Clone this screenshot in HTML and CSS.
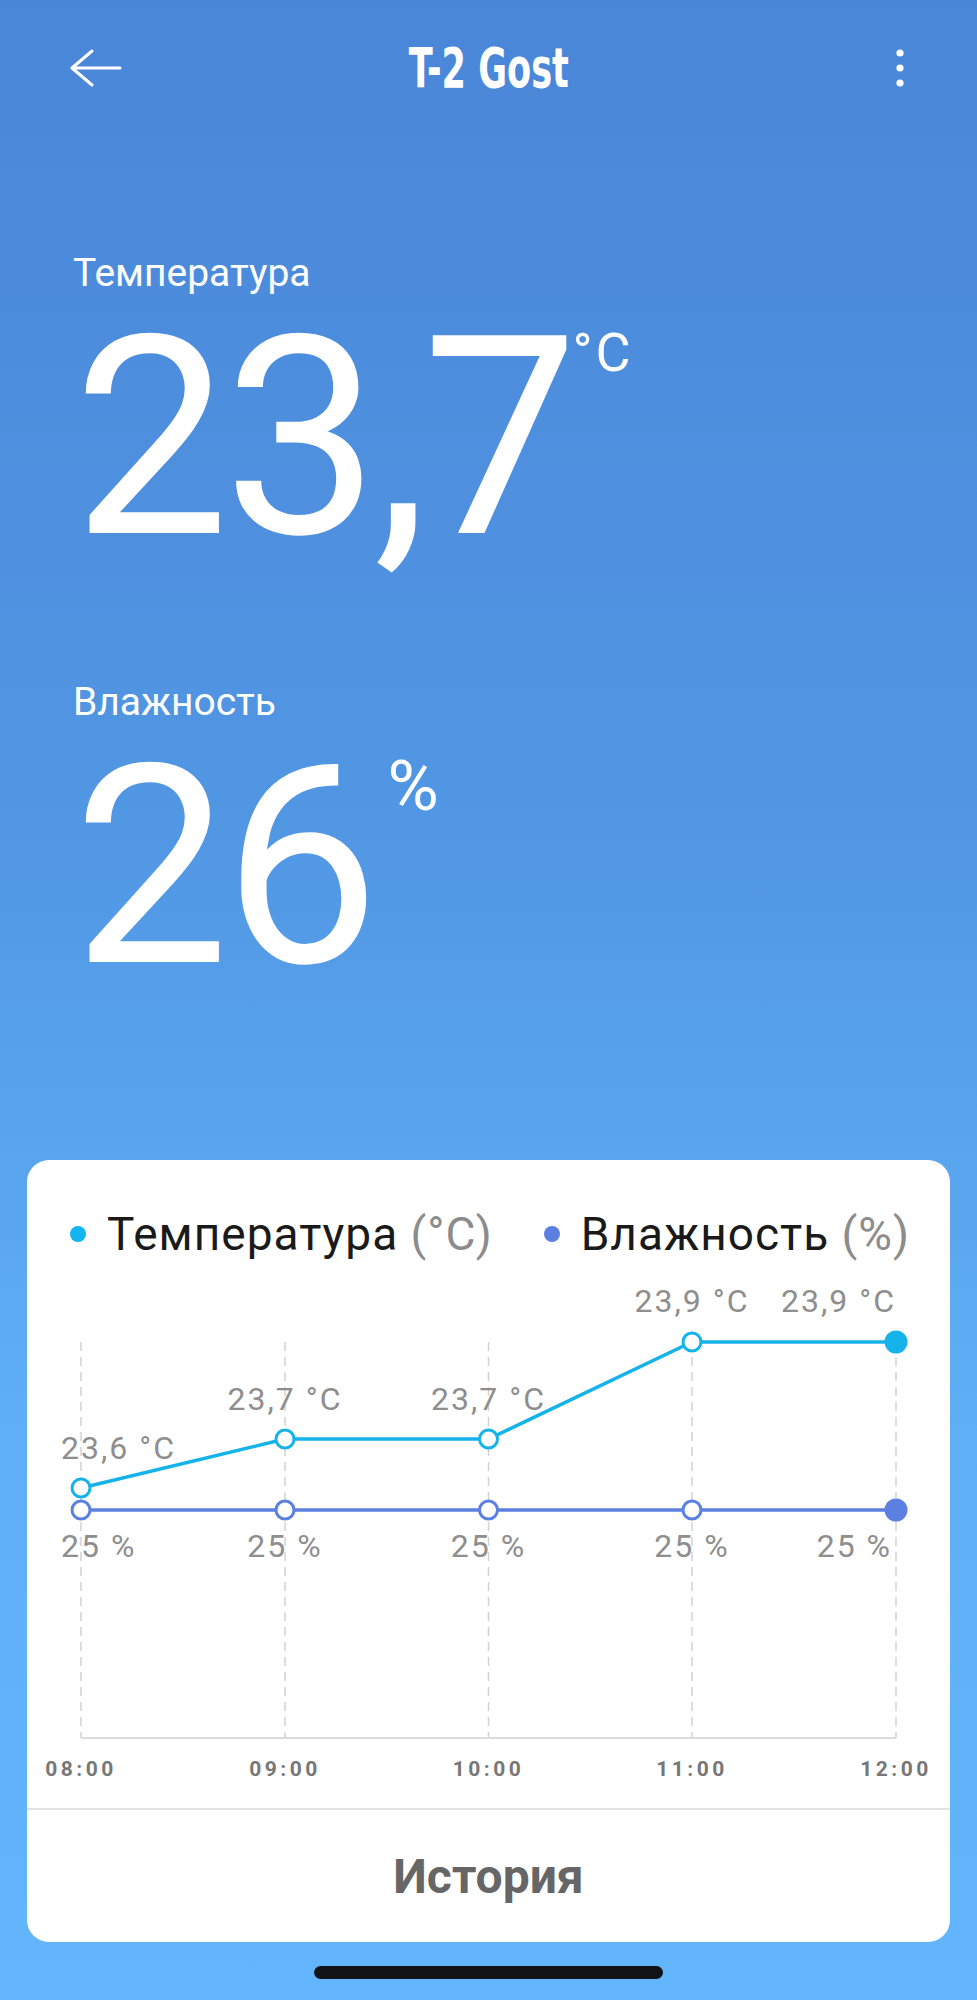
FILE: index.html
```html
<!DOCTYPE html>
<html lang="ru">
<head>
  <meta charset="UTF-8" />
  <meta name="viewport" content="width=device-width, initial-scale=1.0"/>
  <title>T-2 Gost</title>
  <link rel="stylesheet" href="styles.css">
</head>
<body>
  <div class="screen">

    <header class="topbar">
      <button class="icon-btn back" aria-label="Назад">
        <svg width="52" height="38" viewBox="0 0 52 38">
          <path d="M50 19H2M22 2L2 19l20 17" fill="none" stroke="#fff" stroke-width="3" stroke-linecap="round" stroke-linejoin="round"/>
        </svg>
      </button>
      <h1 class="title">T-2 Gost</h1>
      <button class="icon-btn menu" aria-label="Меню">
        <svg width="14" height="40" viewBox="0 0 14 40">
          <circle cx="7" cy="5" r="3.6" fill="#fff"/>
          <circle cx="7" cy="20" r="3.6" fill="#fff"/>
          <circle cx="7" cy="35" r="3.6" fill="#fff"/>
        </svg>
      </button>
    </header>

    <section class="readings">
      <div class="reading">
        <div class="reading-label">Температура</div>
        <div class="reading-value">
          <span class="num">23,7</span><span class="unit unit-temp">°C</span>
        </div>
      </div>
      <div class="reading">
        <div class="reading-label">Влажность</div>
        <div class="reading-value">
          <span class="num">26</span><span class="unit unit-hum">%</span>
        </div>
      </div>
    </section>

    <section class="card">
      <div class="legend">
        <div class="legend-item"><span class="dot dot-temp"></span>Температура <span class="muted">(°C)</span></div>
        <div class="legend-item"><span class="dot dot-hum"></span>Влажность <span class="muted">(%)</span></div>
      </div>

      <svg class="chart" width="923" height="546" viewBox="0 0 923 546">
        <g class="grid">
          <line x1="54" y1="80" x2="54" y2="476"/>
          <line x1="258" y1="80" x2="258" y2="476"/>
          <line x1="461.5" y1="80" x2="461.5" y2="476"/>
          <line x1="665" y1="80" x2="665" y2="476"/>
          <line x1="869" y1="80" x2="869" y2="476"/>
        </g>
        <line class="axis" x1="54" y1="476" x2="869" y2="476"/>

        <polyline class="line-hum" points="54,248 258,248 461.5,248 665,248 869,248"/>
        <polyline class="line-temp" points="54,226 258,177 461.5,177 665,80 869,80"/>

        <g class="pts-hum">
          <circle cx="54" cy="248" r="9"/>
          <circle cx="258" cy="248" r="9"/>
          <circle cx="461.5" cy="248" r="9"/>
          <circle cx="665" cy="248" r="9"/>
          <circle class="last" cx="869" cy="248" r="10"/>
        </g>
        <g class="pts-temp">
          <circle cx="54" cy="226" r="9"/>
          <circle cx="258" cy="177" r="9"/>
          <circle cx="461.5" cy="177" r="9"/>
          <circle cx="665" cy="80" r="9"/>
          <circle class="last" cx="869" cy="80" r="10"/>
        </g>

        <g class="pt-label">
          <text x="34" y="197">23,6 °C</text>
          <text x="258" y="148" text-anchor="middle">23,7 °C</text>
          <text x="461.5" y="148" text-anchor="middle">23,7 °C</text>
          <text x="665" y="50" text-anchor="middle">23,9 °C</text>
          <text x="869" y="50" text-anchor="end">23,9 °C</text>

          <text x="34" y="295">25 %</text>
          <text x="258" y="295" text-anchor="middle">25 %</text>
          <text x="461.5" y="295" text-anchor="middle">25 %</text>
          <text x="665" y="295" text-anchor="middle">25 %</text>
          <text x="865" y="295" text-anchor="end">25 %</text>
        </g>

        <g class="time-label">
          <text x="54" y="514" text-anchor="middle">08:00</text>
          <text x="258" y="514" text-anchor="middle">09:00</text>
          <text x="461.5" y="514" text-anchor="middle">10:00</text>
          <text x="665" y="514" text-anchor="middle">11:00</text>
          <text x="869" y="514" text-anchor="middle">12:00</text>
        </g>
      </svg>

      <button class="history">История</button>
    </section>

    <div class="home-bar"><span class="home-indicator"></span></div>
  </div>
</body>
</html>
```

FILE: styles.css
```css
body {
  margin: 0;
  font-family: Roboto, "Liberation Sans", sans-serif;
  background: #62b5fb;
}

.screen {
  width: 977px;
  height: 2000px;
  display: flex;
  flex-direction: column;
  background: linear-gradient(180deg, #4a86d8 0%, #5196e3 40%, #5eaef5 70%, #63b6fc 100%);
  color: #fff;
  overflow: hidden;
}

/* top bar */
.topbar {
  height: 136px;
  padding: 0 70px;
  display: grid;
  grid-template-columns: 1fr auto 1fr;
  align-items: center;
}

.icon-btn {
  background: none;
  border: none;
  padding: 0;
  display: flex;
}

.icon-btn.back {
  justify-self: start;
}

.icon-btn.menu {
  justify-self: end;
}

.title {
  margin: 0;
  font-family: "DejaVu Sans Condensed", "DejaVu Sans", sans-serif;
  font-stretch: condensed;
  font-weight: bold;
  font-size: 55px;
  line-height: 60px;
  transform: scaleX(0.71);
}

/* current readings */
.readings {
  padding: 114px 0 0 73px;
}

.reading + .reading {
  margin-top: 102px;
}

.reading-label {
  font-size: 39px;
  line-height: 46px;
}

.reading-value {
  display: flex;
  align-items: flex-start;
  margin-top: 3px;
}

.reading-value .num {
  font-size: 278px;
  line-height: 278px;
  letter-spacing: -6px;
}

.unit {
  font-size: 52px;
  line-height: 52px;
}

.unit-temp {
  font-size: 54px;
  letter-spacing: 3px;
  margin: 28px 0 0 0;
}

.unit-hum {
  font-size: 70px;
  line-height: 70px;
  margin: 23px 0 0 14px;
}

/* chart card */
.card {
  margin: auto 27px 0;
  background: #fff;
  border-radius: 22px;
  color: #1a1a1a;
  display: flex;
  flex-direction: column;
}

.legend {
  display: flex;
  justify-content: space-between;
  padding: 46px 40px 0 43px;
  font-size: 46px;
  line-height: 56px;
  letter-spacing: 1px;
}

.legend-item {
  display: flex;
  align-items: center;
  white-space: pre;
}

.muted {
  color: #8c8c8c;
}

.dot {
  width: 16px;
  height: 16px;
  border-radius: 50%;
  margin-right: 21px;
}

.dot-temp {
  background: #12b5f0;
}

.dot-hum {
  background: #5b80e2;
}

.chart {
  display: block;
}

.grid line {
  stroke: #d2d2d2;
  stroke-width: 1.5;
  stroke-dasharray: 9 6;
}

.axis {
  stroke: #dcdcdc;
  stroke-width: 2;
}

.line-temp,
.line-hum {
  fill: none;
  stroke-width: 3.5;
}

.line-temp {
  stroke: #16b3eb;
}

.line-hum {
  stroke: #5b80e2;
}

.pts-temp circle,
.pts-hum circle {
  fill: #fff;
  stroke-width: 3;
}

.pts-temp circle {
  stroke: #16b3eb;
}

.pts-hum circle {
  stroke: #5b80e2;
}

.pts-temp circle.last {
  fill: #16b3eb;
}

.pts-hum circle.last {
  fill: #5b80e2;
}

.pt-label text {
  font-family: Roboto, sans-serif;
  font-size: 32px;
  letter-spacing: 2px;
  fill: #8e8e8e;
}

.time-label text {
  font-family: Roboto, sans-serif;
  font-weight: bold;
  font-size: 21px;
  letter-spacing: 3.5px;
  fill: #777;
}

.history {
  height: 134px;
  border: none;
  border-top: 2px solid #e2e2e2;
  background: none;
  font-family: Roboto, sans-serif;
  font-size: 48px;
  font-weight: bold;
  color: #666;
}

/* home indicator */
.home-bar {
  height: 58px;
  display: flex;
  justify-content: center;
}

.home-indicator {
  width: 349px;
  height: 13px;
  margin-top: 24px;
  border-radius: 7px;
  background: #101318;
}
```
